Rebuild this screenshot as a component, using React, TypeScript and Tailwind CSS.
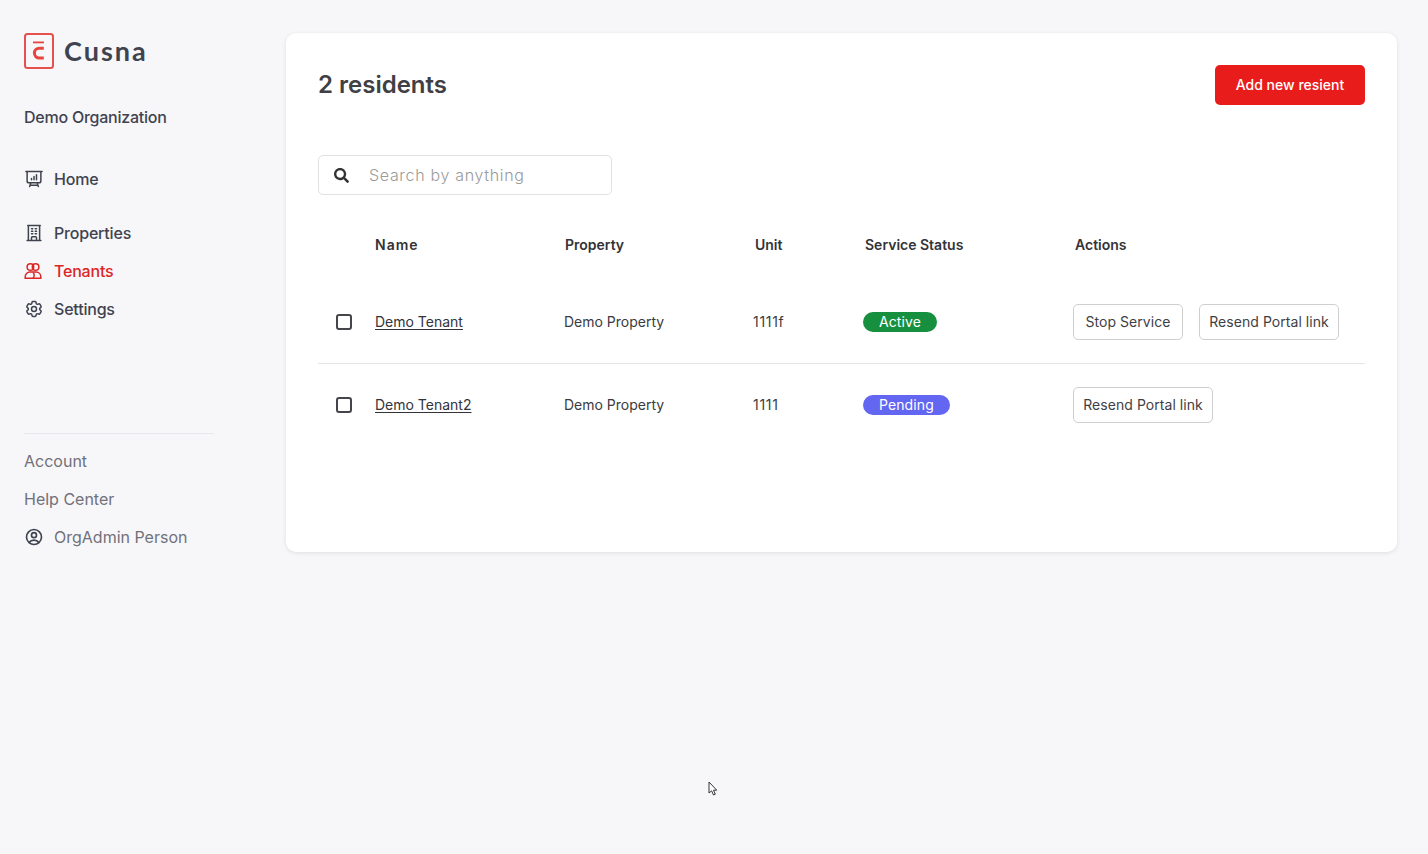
import React from "react";
import { HiOutlinePresentationChartBar, HiOutlineBuildingOffice, HiOutlineCog6Tooth, HiOutlineUserCircle } from "react-icons/hi2";
import { FaSearch } from "react-icons/fa";

const inter = { fontFamily: '"Inter", sans-serif' };

function Logo() {
  return (
    <svg width="30" height="36" viewBox="0 0 30 36" fill="none">
      <rect x="1" y="1" width="28" height="34" rx="2.5" stroke="#e4514f" strokeWidth="2" />
      <path d="M9 9.4h11" stroke="#e8443f" strokeWidth="1.8" />
      <path d="M19.8 15.2H15.3a4.9 4.9 0 0 0 0 9.8h4.5" stroke="#e8443f" strokeWidth="3" />
    </svg>
  );
}

function TenantsIcon() {
  return (
    <svg width="18" height="18" viewBox="0 0 18 18" fill="none" stroke="#dc2626" strokeWidth="1.5">
      <circle cx="6.4" cy="5" r="3.3" />
      <circle cx="11.6" cy="5" r="3.3" />
      <path d="M1.2 16.2v-1.5a4.6 4.6 0 0 1 4.6-4.6h6.4a4.6 4.6 0 0 1 4.6 4.6v1.5z" />
      <path d="M9 10.5a4 4 0 0 1 0 5.7" />
    </svg>
  );
}

function NavItem({ icon, label, className }: { icon: React.ReactNode; label: string; className: string }) {
  return (
    <div className={`flex h-[38px] items-center ${className}`}>
      <span className="flex w-[30px] items-center">{icon}</span>
      <span>{label}</span>
    </div>
  );
}

const headers = [
  { label: "Name", cls: "tracking-[1px]" },
  { label: "Property", cls: "" },
  { label: "Unit", cls: "" },
  { label: "Service Status", cls: "" },
  { label: "Actions", cls: "" },
];

function ActionButton({ children }: { children: React.ReactNode }) {
  return (
    <button className="h-9 rounded-[5px] border border-[#cfcfcf] bg-white text-sm tracking-[0.05px] text-[#3f3f46]">
      {children}
    </button>
  );
}

function Row({ name, unit, status, badge, actions, rowClass }: { name: string; unit: string; status: string; badge: string; actions: React.ReactNode; rowClass: string }) {
  return (
    <div className={`grid grid-cols-[57px_189px_189px_110px_210px_1fr] items-center text-sm text-[#3b3b40] ${rowClass}`}>
      <div className="pl-[18px]">
        <div className="h-4 w-4 rounded-[3px] border-2 border-[#45454a]" />
      </div>
      <a className="text-[#33333a] underline underline-offset-2">{name}</a>
      <div>Demo Property</div>
      <div className="tracking-[0.7px]">{unit}</div>
      <div>
        <span className={`inline-flex h-5 items-center rounded-full px-4 tracking-[0.1px] text-white ${badge}`}>{status}</span>
      </div>
      <div className="flex gap-4">{actions}</div>
    </div>
  );
}

export default function App() {
  return (
    <div style={inter} className="relative flex h-[854px] w-[1428px] overflow-hidden bg-[#f7f7f9]">
      <aside className="flex w-[286px] shrink-0 flex-col pl-6 pr-[72px] pt-[33px]">
        <div className="flex h-9 items-center gap-[10px]">
          <Logo />
          <span style={{ fontFamily: '"Lato", sans-serif' }} className="text-[27px] font-bold tracking-[2px] text-[#3f4350]">Cusna</span>
        </div>
        <div className="mt-[36px] flex h-6 items-center text-base font-medium tracking-[-0.24px] text-[#3f4350]">Demo Organization</div>
        <div className="mt-[31px] text-base font-medium tracking-[-0.2px] text-[#3f4350]">
          <NavItem icon={<HiOutlinePresentationChartBar size={20} strokeWidth={1.8} />} label="Home" className="" />
          <div className="h-4" />
          <NavItem icon={<HiOutlineBuildingOffice size={20} strokeWidth={1.8} />} label="Properties" className="" />
          <NavItem icon={<TenantsIcon />} label="Tenants" className="text-[#dc2626]" />
          <NavItem icon={<HiOutlineCog6Tooth size={20} strokeWidth={1.8} />} label="Settings" className="" />
        </div>
        <div className="mt-[105px] border-t border-[#e8e8ec] pt-2 text-base text-[#71717a]">
          <div className="flex h-[38px] items-center">Account</div>
          <div className="flex h-[38px] items-center">Help Center</div>
          <NavItem icon={<HiOutlineUserCircle size={20} className="text-[#3f4350]" strokeWidth={2} />} label="OrgAdmin Person" className="" />
        </div>
      </aside>

      <main className="mt-[33px] h-[519px] w-[1111px] rounded-[10px] bg-white px-8 pt-8 shadow-[0_1px_4px_rgba(0,0,0,0.1)]">
        <div className="flex h-10 items-center justify-between">
          <h1 className="text-2xl font-semibold text-[#3f4046]">2 residents</h1>
          <button className="h-10 w-[150px] rounded-[5px] bg-[#e91c1c] text-sm font-medium text-white">Add new resient</button>
        </div>
        <div className="mt-[50px] flex h-10 w-[294px] items-center rounded-[5px] border border-[#e2e2e2] pl-[15px]">
          <FaSearch size={15} className="text-[#333]" />
          <span className="ml-5 text-base font-light tracking-[0.68px] text-[#9a9a9a]">Search by anything</span>
        </div>
        <div className="mt-[30px] grid h-10 grid-cols-[57px_190px_190px_110px_210px_1fr] items-center text-sm font-semibold text-[#333338]">
          <div />
          {headers.map((h) => (
            <div key={h.label} className={h.cls}>{h.label}</div>
          ))}
        </div>
        <div className="mt-4">
          <Row
            name="Demo Tenant"
            unit="1111f"
            status="Active"
            badge="bg-[#16903f]"
            rowClass="h-[83px] border-b border-[#e5e5e5]"
            actions={
              <>
                <ActionButton><span className="block w-[108px]">Stop Service</span></ActionButton>
                <ActionButton><span className="block w-[138px]">Resend Portal link</span></ActionButton>
              </>
            }
          />
          <Row
            name="Demo Tenant2"
            unit="1111"
            status="Pending"
            badge="bg-[#6366f1]"
            rowClass="h-[82px]"
            actions={<ActionButton><span className="block w-[138px]">Resend Portal link</span></ActionButton>}
          />
        </div>
      </main>

      <svg className="absolute left-[708px] top-[781px]" width="10" height="16" viewBox="0 0 10 16">
        <path d="M1 1v11l2.6-2.2L5.5 14l1.8-.8-1.8-4h3.2z" fill="#fff" stroke="#333" strokeWidth="1" />
      </svg>
    </div>
  );
}
